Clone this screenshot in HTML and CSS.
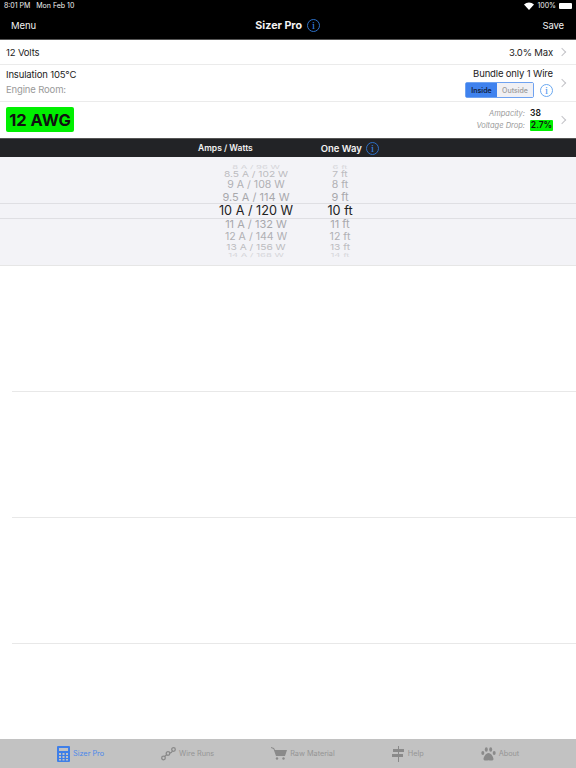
FILE: index.html
```html
<!DOCTYPE html>
<html lang="en">
  <head>
    <meta charset="UTF-8" />
    <meta name="viewport" content="width=device-width, initial-scale=1.0" />
    <title>Sizer Pro</title>
    <link rel="stylesheet" href="styles.css">
  </head>
  <body>
    <div class="page">
      <div class="top">
        <div class="status">
          <span>8:01 PM&nbsp;&nbsp;&nbsp;Mon Feb 10</span>
          <div class="status-right">
            <svg width="10" height="8" viewBox="0 0 10 8"><path d="M5 8 0 2.600C2.800-.2 7.200-.2 10 2.600z" fill="#fff"/></svg>
            <span>100%</span>
            <div class="battery"></div>
          </div>
        </div>
        <div class="nav">
          <span>Menu</span>
          <div class="nav-title">
            <b>Sizer Pro</b>
            <span class="info info-dark">i</span>
          </div>
          <span>Save</span>
        </div>
      </div>

      <div class="row row-volts">
        <span>12 Volts</span>
        <div class="row-end">
          <span>3.0% Max</span>
          <span class="chev"></span>
        </div>
      </div>
      <div class="row row-ins">
        <div class="stack stack-left">
          <span>Insulation 105°C</span>
          <span class="muted">Engine Room:</span>
        </div>
        <div class="row-end">
          <div class="stack stack-right">
            <span>Bundle only 1 Wire</span>
            <div class="seg-line">
              <div class="seg">
                <span class="seg-on">Inside</span>
                <span class="seg-off">Outside</span>
              </div>
              <span class="info info-light">i</span>
            </div>
          </div>
          <span class="chev"></span>
        </div>
      </div>
      <div class="row row-awg">
        <div class="awg">12 AWG</div>
        <div class="row-end">
          <div class="results">
            <i>Ampacity:</i><b>38</b>
            <i>Voltage Drop:</i><b class="drop">2.7%</b>
          </div>
          <span class="chev"></span>
        </div>
      </div>

      <div class="cols">
        <b class="col-amps">Amps / Watts</b>
        <div class="col-way">
          <b>One Way</b>
          <span class="info info-dark">i</span>
        </div>
      </div>

      <div class="picker">
        <div class="band"></div>
        <div class="wheel wheel-amps">
          <span class="p4">8 A / 96 W</span>
          <span class="p3">8.5 A / 102 W</span>
          <span class="p2">9 A / 108 W</span>
          <span class="p1">9.5 A / 114 W</span>
          <span class="p0">10 A / 120 W</span>
          <span class="p1">11 A / 132 W</span>
          <span class="p2">12 A / 144 W</span>
          <span class="p3">13 A / 156 W</span>
          <span class="p4">14 A / 168 W</span>
        </div>
        <div class="wheel wheel-way">
          <span class="p4">6 ft</span>
          <span class="p3">7 ft</span>
          <span class="p2">8 ft</span>
          <span class="p1">9 ft</span>
          <span class="p0">10 ft</span>
          <span class="p1">11 ft</span>
          <span class="p2">12 ft</span>
          <span class="p3">13 ft</span>
          <span class="p4">14 ft</span>
        </div>
      </div>

      <div class="empty">
        <div class="empty-row"></div>
        <div class="empty-row"></div>
        <div class="empty-row"></div>
      </div>

      <div class="tabs">
        <div class="tab tab-on">
          <svg width="13" height="16" viewBox="0 0 13 16">
            <rect width="13" height="16" rx="1" fill="#3f7fe8"/>
            <rect x="2" y="2" width="9" height="3" fill="#c2c2c2"/>
            <path d="M2 7h2v2H2zM5.500 7h2v2h-2zM9 7h2v2H9zM2 10h2v2H2zM5.500 10h2v2h-2zM9 10h2v2H9zM2 13h2v1.500H2zM5.500 13h2v1.500h-2zM9 13h2v1.500H9z" fill="#c2c2c2"/>
          </svg>
          <span>Sizer Pro</span>
        </div>
        <div class="tab tab-wire">
          <svg width="15" height="14" viewBox="0 0 15 14" fill="none" stroke="#8a8a8a" stroke-width="1.300">
            <circle cx="2.500" cy="11" r="1.800"/>
            <circle cx="7" cy="6.500" r="1.800"/>
            <circle cx="12.500" cy="2.500" r="1.800"/>
            <path d="M3.500 9.500 5.700 7.800M8.700 6C10 6 11 5 11.500 4"/>
          </svg>
          <span>Wire Runs</span>
        </div>
        <div class="tab tab-raw">
          <svg width="16" height="13" viewBox="0 0 16 13" fill="#8a8a8a">
            <path d="M0 0 3 1 4 3h12l-2 6H5L2.500 2 0 1z"/>
            <circle cx="6" cy="11.500" r="1.200"/>
            <circle cx="12.500" cy="11.500" r="1.200"/>
          </svg>
          <span>Raw Material</span>
        </div>
        <div class="tab tab-help">
          <svg width="13" height="16" viewBox="0 0 13 16" fill="#8a8a8a">
            <path d="M6 0h1v16H6z"/>
            <path d="M1 3h11v3H1zM0 8h11v3H0z"/>
          </svg>
          <span>Help</span>
        </div>
        <div class="tab tab-about">
          <svg width="15" height="14" viewBox="0 0 15 14" fill="#8a8a8a">
            <ellipse cx="1.800" cy="6" rx="1.500" ry="2"/>
            <ellipse cx="5.300" cy="2.500" rx="1.500" ry="2.200"/>
            <ellipse cx="9.700" cy="2.500" rx="1.500" ry="2.200"/>
            <ellipse cx="13.200" cy="6" rx="1.500" ry="2"/>
            <path d="M7.500 6C10 6 12.500 10 12.500 12c0 2-3 1.500-5 1.200-2 .3-5 .8-5-1.200 0-2 2.500-6 5-6z"/>
          </svg>
          <span>About</span>
        </div>
      </div>
    </div>
  </body>
</html>
```

FILE: styles.css
```css
* {
  box-sizing: border-box;
}
body {
  margin: 0;
  font-family: Inter, "Liberation Sans", Arial, sans-serif;
  background-color: #fff;
  color: #1c1c1c;
}
.page {
  width: 576px;
  height: 768px;
  display: flex;
  flex-direction: column;
  overflow: hidden;
}
/* Black status and nav bar */
.top {
  height: 40px;
  flex: none;
  background-color: #000;
  border-bottom: 1px solid #555;
  color: #f2f2f2;
}
.status {
  height: 11px;
  padding: 0 3px 0 4px;
  display: flex;
  justify-content: space-between;
  align-items: center;
  font-size: 7px;
}
.status-right {
  display: flex;
  align-items: center;
  gap: 3px;
}
.battery {
  width: 13px;
  height: 6px;
  background-color: #fff;
  border-radius: 1px;
  margin-right: 1px;
}
.nav {
  height: 28px;
  padding: 0 12px 0 11px;
  display: flex;
  justify-content: space-between;
  align-items: center;
  font-size: 9.500px;
  letter-spacing: -0.1px;
}
.nav-title {
  display: flex;
  align-items: center;
  gap: 5px;
  margin-left: -3px;
  font-size: 10.700px;
  letter-spacing: 0;
}
.info {
  width: 13px;
  height: 13px;
  border-radius: 50%;
  border: 1px solid;
  display: flex;
  justify-content: center;
  align-items: center;
  font-family: "Liberation Serif", serif;
  font-size: 11px;
}
.info-dark {
  color: #3a86e8;
  border-color: #2d70c8;
}
.info-light {
  color: #4a96f0;
  border-color: #6aa8f0;
}
/* Settings rows */
.row {
  flex: none;
  display: flex;
  justify-content: space-between;
  align-items: center;
  padding: 0 10px 0 6px;
  font-size: 9.500px;
  letter-spacing: -0.15px;
  border-bottom: 1px solid #ebebeb;
}
.row-volts {
  height: 25px;
}
.row-ins {
  height: 37px;
}
.row-awg {
  height: 36px;
  padding-bottom: 1px;
  border-bottom: 0;
}
.row-end {
  display: flex;
  align-items: center;
  gap: 6px;
}
.stack {
  display: flex;
  flex-direction: column;
  gap: 4px;
}
.stack-left {
  padding-bottom: 2px;
}
.stack-right {
  align-items: flex-end;
  gap: 3px;
}
.muted {
  color: #9a9a9a;
}
.chev {
  width: 6px;
  height: 6px;
  margin-right: 1px;
  border-top: 1px solid #c4c4c8;
  border-right: 1px solid #c4c4c8;
  transform: rotate(45deg);
}
.seg-line {
  display: flex;
  align-items: center;
  gap: 6px;
}
.seg {
  display: flex;
  height: 16px;
  border: 1px solid #6fa2f0;
  border-radius: 2px;
  font-size: 7px;
  letter-spacing: 0;
}
.seg-on {
  width: 31px;
  background-color: #3f82ee;
  color: #12213c;
  display: flex;
  justify-content: center;
  align-items: center;
  font-weight: 600;
}
.seg-off {
  width: 36px;
  background-color: #f0f0f4;
  color: #9a9a9a;
  display: flex;
  justify-content: center;
  align-items: center;
  font-weight: 500;
}
.awg {
  width: 68px;
  height: 25px;
  background-color: #00f000;
  border-radius: 2px;
  color: #111;
  font-size: 16.500px;
  font-weight: 700;
  letter-spacing: 0;
  display: flex;
  justify-content: center;
  align-items: center;
}
.results {
  display: grid;
  grid-template-columns: auto 23px;
  column-gap: 5px;
  row-gap: 2px;
  align-items: center;
  font-size: 7.500px;
  letter-spacing: 0;
}
.results i {
  text-align: right;
  color: #9a9a9a;
}
.results b {
  color: #111;
  font-size: 8.500px;
  font-weight: 600;
}
.drop {
  background-color: #00f000;
  border-radius: 1px;
  text-align: center;
  line-height: 11px;
}
/* Column header */
.cols {
  height: 19px;
  flex: none;
  background-color: #222326;
  border-top: 1px solid #555;
  color: #f2f2f2;
  display: flex;
  align-items: center;
  font-size: 8.500px;
}
.col-amps {
  margin-left: 198px;
  font-weight: 600;
}
.col-way {
  margin-left: 68px;
  display: flex;
  align-items: center;
  gap: 4px;
  font-size: 9.500px;
}
.col-way b {
  font-weight: 600;
}
/* Picker */
.picker {
  height: 109px;
  flex: none;
  background-color: #f3f3f7;
  border-bottom: 1px solid #e6e6e6;
  position: relative;
  display: flex;
}
.band {
  position: absolute;
  top: 46px;
  left: 0;
  right: 0;
  height: 16px;
  border-top: 1px solid #dfdfe3;
  border-bottom: 1px solid #dfdfe3;
}
.wheel {
  position: relative;
  display: flex;
  flex-direction: column;
  align-items: center;
  padding-top: 7px;
}
.wheel span {
  white-space: nowrap;
}
.wheel-amps {
  width: 120px;
  margin-left: 196px;
}
.wheel-way {
  width: 60px;
  margin-left: -6px;
}
.p0 {
  height: 14px;
  line-height: 14px;
  font-size: 12.700px;
  color: #222;
}
.p1 {
  height: 13px;
  line-height: 13px;
  font-size: 11px;
  color: #a8a8ac;
}
.p2 {
  height: 12px;
  line-height: 12px;
  font-size: 10.600px;
  color: #b0b0b4;
  transform: scaleY(0.95);
}
.p3 {
  height: 9px;
  line-height: 9px;
  font-size: 10.200px;
  color: #bcbcc0;
  transform: scaleY(0.8);
}
.p4 {
  height: 6px;
  line-height: 6px;
  font-size: 9.500px;
  color: #d6d6da;
  transform: scaleY(0.5);
}
/* Empty table rows */
.empty {
  flex: 1;
}
.empty-row {
  height: 126px;
  margin-left: 12px;
  border-bottom: 1px solid #e8e8e8;
}
/* Tab bar */
.tabs {
  height: 29px;
  flex: none;
  background-color: #c2c2c2;
  display: flex;
  align-items: center;
  font-size: 7.300px;
  color: #959595;
}
.tab {
  display: flex;
  align-items: center;
  gap: 3px;
}
.tab-on {
  color: #4a88ea;
  margin-left: 57px;
}
.tab-wire {
  margin-left: 57px;
}
.tab-raw {
  margin-left: 57px;
}
.tab-help {
  margin-left: 57px;
}
.tab-about {
  margin-left: 57px;
}
```
